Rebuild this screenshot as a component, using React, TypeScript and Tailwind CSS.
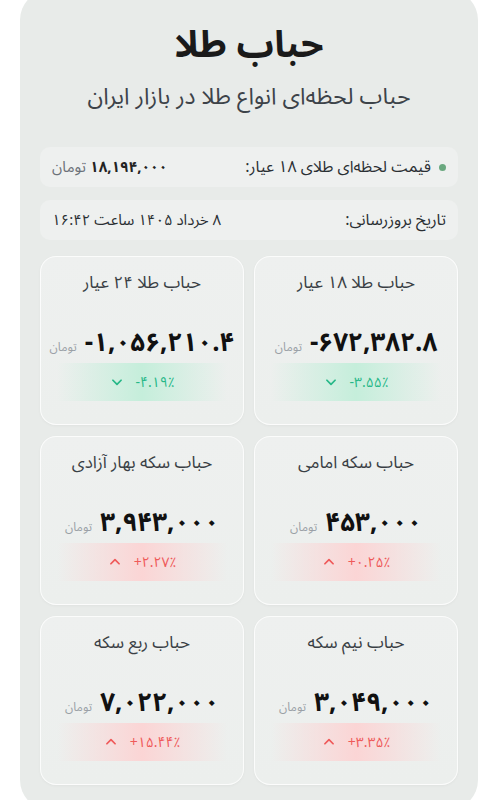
import React from "react";

type Bubble = {
  title: string;
  value: string;
  change: string;
  up: boolean;
};

const bubbles: Bubble[] = [
  { title: "حباب طلا ۱۸ عیار", value: "-۶۷۲,۳۸۲.۸", change: "-۳.۵۵٪", up: false },
  { title: "حباب طلا ۲۴ عیار", value: "-۱,۰۵۶,۲۱۰.۴", change: "-۴.۱۹٪", up: false },
  { title: "حباب سکه امامی", value: "۴۵۳,۰۰۰", change: "+۰.۲۵٪", up: true },
  { title: "حباب سکه بهار آزادی", value: "۳,۹۴۳,۰۰۰", change: "+۲.۲۷٪", up: true },
  { title: "حباب نیم سکه", value: "۳,۰۴۹,۰۰۰", change: "+۳.۳۵٪", up: true },
  { title: "حباب ربع سکه", value: "۷,۰۲۲,۰۰۰", change: "+۱۵.۴۴٪", up: true },
];

function Chevron({ up }: { up: boolean }) {
  return (
    <svg width="14" height="14" viewBox="0 0 12 12" fill="none" stroke="currentColor" strokeWidth="1.5" strokeLinecap="round" strokeLinejoin="round">
      {up ? <path d="M2.5 7.5 6 4l3.5 3.5" /> : <path d="M2.5 4.5 6 8l3.5-3.5" />}
    </svg>
  );
}

function BubbleCard({ b }: { b: Bubble }) {
  return (
    <div className="flex h-[169px] flex-col items-center rounded-2xl border border-white/80 bg-gradient-to-b from-[#eef0ef] to-[#ecefed] px-4 shadow-[0_1px_3px_rgba(0,0,0,0.04)]">
      <div className="mt-[14px] text-[17px] leading-[24px] text-[#3a3f45]">{b.title}</div>
      <div className="mt-[32px] flex items-baseline gap-2" dir="ltr">
        <span className="text-[12px] text-[#9aa0a6]">تومان</span>
        <span className="text-[26px] font-bold leading-[32px] text-[#111]">{b.value}</span>
      </div>
      <div
        className={
          b.up
            ? "mt-[4px] flex h-[38px] w-full items-center justify-center gap-3 bg-gradient-to-r from-transparent via-[#fbd5d5] to-transparent text-[14px] text-[#ef5a5a]"
            : "mt-[4px] flex h-[38px] w-full items-center justify-center gap-3 bg-gradient-to-r from-transparent via-[#c5eedb] to-transparent text-[14px] text-[#27b888]"
        }
        dir="ltr"
      >
        <Chevron up={b.up} />
        <bdi dir="ltr">{b.change}</bdi>
      </div>
    </div>
  );
}

export default function App() {
  return (
    <div
      dir="rtl"
      className="h-[800px] overflow-hidden bg-white"
      style={{ fontFamily: '"Noto Sans Arabic", "DejaVu Sans", sans-serif' }}
    >
      <div className="mx-[20px] mt-[-10px] h-[820px] rounded-[30px] bg-[#e8ebe9] px-[20px]">
        <h1 className="pt-[31px] text-center text-[37px] font-bold leading-[48px] text-[#1a1a1a]">حباب طلا</h1>
        <p className="mt-[13px] text-center text-[23px] leading-[30px] text-[#3d4349]">حباب لحظه‌ای انواع طلا در بازار ایران</p>

        <div className="mt-[35px] flex h-[40px] items-center justify-between rounded-[10px] bg-[#eef0ef] px-3">
          <div className="flex items-center gap-2 text-[16px] text-[#2a2f33]">
            <span className="h-[7px] w-[7px] rounded-full bg-[#6aa87f]" />
            <span>قیمت لحظه‌ای طلای ۱۸ عیار:</span>
          </div>
          <div className="flex items-center gap-1 text-[15px]">
            <span className="font-bold text-[#222]">۱۸,۱۹۴,۰۰۰</span>
            <span className="text-[#6b7178]">تومان</span>
          </div>
        </div>

        <div className="mt-[13px] flex h-[40px] items-center justify-between rounded-[10px] bg-[#eef0ef] px-3 text-[15px] text-[#2a2f33]">
          <span className="text-[16px]">تاریخ بروزرسانی:</span>
          <span>۸ خرداد ۱۴۰۵ ساعت ۱۶:۴۲</span>
        </div>

        <div className="mt-[16px] grid grid-cols-2 gap-x-[10px] gap-y-[11px]">
          {bubbles.map((b) => (
            <BubbleCard key={b.title} b={b} />
          ))}
        </div>
      </div>
    </div>
  );
}
